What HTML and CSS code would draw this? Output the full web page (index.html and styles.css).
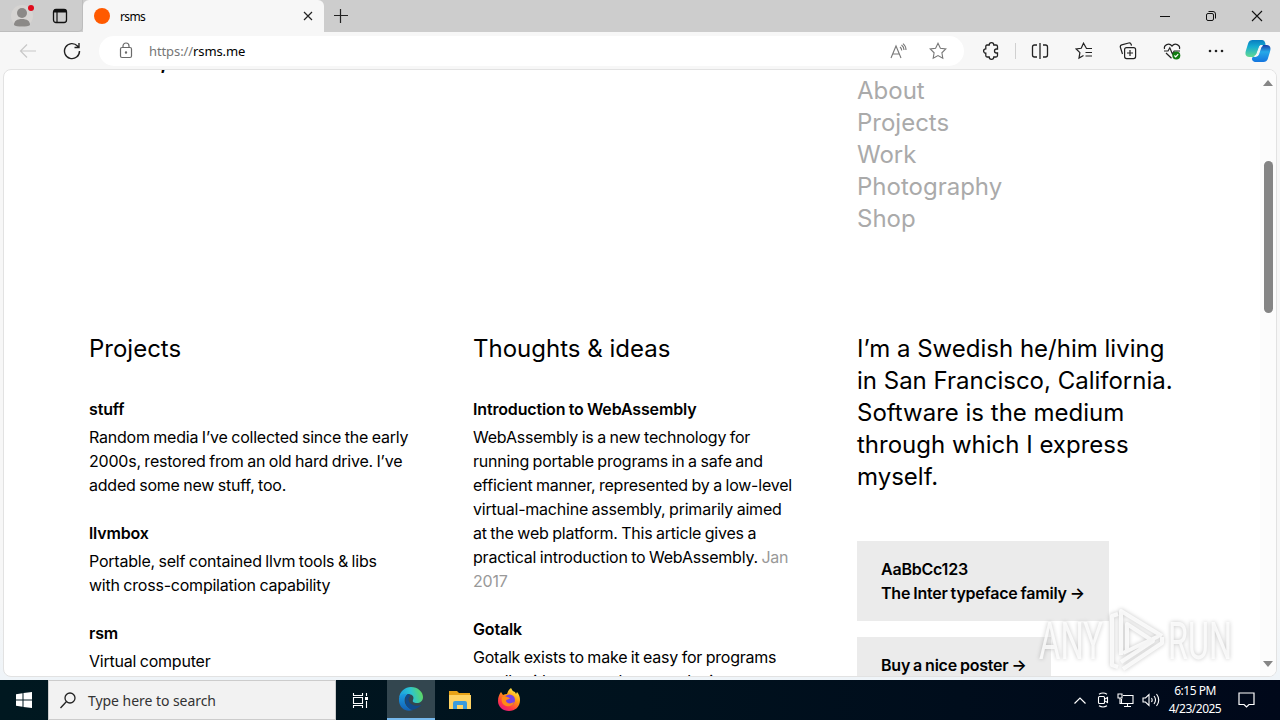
FILE: index.html
```html
<!DOCTYPE html>
<html lang="en">
<head>
    <meta charset="UTF-8">
    <meta name="viewport" content="width=device-width, initial-scale=1.0">
    <title>rsms</title>
    <link rel="stylesheet" href="styles.css">
</head>
<body>
    <div class="titlebar">
        <div class="profile">
            <svg width="24" height="24" viewBox="0 0 24 24"><circle cx="12" cy="12" r="11" fill="#d6d4d2"/><circle cx="12" cy="9" r="5" fill="#8b8987"/><path d="M4 21c0-4 3-6 8-6s8 2 8 6c-2 2-14 2-16 0z" fill="#8b8987"/><circle cx="21" cy="4" r="3" fill="#e00b1c"/></svg>
            <svg width="16" height="16" viewBox="0 0 16 16" fill="none" stroke="#111"><rect x="1.5" y="1.5" width="13" height="13" rx="2.5" stroke-width="1.3"/><path d="M2 3.5h12M2 2.5h12" stroke-width="2"/><path d="M5 4v10" stroke-width="1.2"/></svg>
        </div>
        <div class="tab">
            <span class="favicon"></span>
            <span class="tab-title">rsms</span>
            <svg width="10" height="10" viewBox="0 0 10 10" stroke="#222" stroke-width="1.2"><path d="M1 1l8 8M9 1l-8 8"/></svg>
        </div>
        <svg class="new-tab" width="16" height="16" viewBox="0 0 16 16" stroke="#222" stroke-width="1.2"><path d="M1 7.5h14M7.5 1v14"/></svg>
        <div class="window-buttons">
            <svg width="12" height="12" viewBox="0 0 12 12" stroke="#111"><path d="M1 6.5h10"/></svg>
            <svg width="12" height="12" viewBox="0 0 12 12" stroke="#111" fill="none"><rect x="1.5" y="3.5" width="7" height="7" rx="1.5"/><path d="M3.500 1.500h4.500q2.500 0 2.500 2.500v4.500"/></svg>
            <svg width="12" height="12" viewBox="0 0 12 12" stroke="#111" stroke-width="1.1"><path d="M1 1l10 10M11 1L1 11"/></svg>
        </div>
    </div>

    <div class="toolbar">
        <svg class="back" width="18" height="16" viewBox="0 0 18 16" fill="none" stroke="#c8c8c8" stroke-width="1.2"><path d="M17 8H2M8 1.500L1.500 8 8 14.500"/></svg>
        <svg class="reload" width="18" height="18" viewBox="0 0 18 18" fill="none" stroke="#222" stroke-width="1.4"><path d="M16.500 9A7.500 7.500 0 1 1 14.500 4L16 5.500M16 1v4.500h-4.500"/></svg>
        <div class="address">
            <svg class="lock" width="14" height="17" viewBox="0 0 14 17" fill="none" stroke="#6a6a6a" stroke-width="1.2"><rect x="1.500" y="5.500" width="11" height="10" rx="1.500"/><path d="M4 5.500V4a3 3 0 0 1 6 0v1.500"/><circle cx="7" cy="10.500" r=".6" fill="#6a6a6a"/></svg>
            <span class="url"><span>https://</span>rsms.me</span>
            <svg class="read" width="18" height="16" viewBox="0 0 18 16" fill="none" stroke="#777" stroke-width="1.1"><path d="M2 15L7 3l5 12M4 11h6M11 4q1.700 1.400 1.700 3.500M12.500 2q2.500 1.800 2.500 5M14 .6Q17 3 17 7"/></svg>
            <svg width="18" height="18" viewBox="0 0 18 18" fill="none" stroke="#777" stroke-width="1.1"><path d="M9 1.300l2.400 4.900 5.400.8-3.900 3.800.9 5.400L9 13.600l-4.800 2.600.9-5.400L1.200 7l5.400-.8z"/></svg>
        </div>
        <div class="tools">
            <svg width="18" height="18" viewBox="0 0 18 18" fill="none" stroke="#222" stroke-width="1.3"><path d="M5 3h2.200a2.300 2.300 0 0 1 4.600 0H14q1.500 0 1.500 1.500V7h-1a2 2 0 0 0 0 4h1v2.500q0 1.500-1.500 1.500h-2.200a2.300 2.300 0 0 1-4.600 0H5q-1.200 0-1.200-1.500v-2.300a2.200 2.200 0 0 1 0-4.400V4.500Q3.800 3 5 3z"/></svg>
            <span class="divider"></span>
            <svg width="18" height="18" viewBox="0 0 18 18" fill="none" stroke="#222" stroke-width="1.3"><path d="M6 3H3.500q-2 0-2 2v8q0 2 2 2H6M12 3h2.500q2 0 2 2v8q0 2-2 2H12M9 1v16"/></svg>
            <svg width="18" height="18" viewBox="0 0 18 18" fill="none" stroke="#222" stroke-width="1.2"><path d="M17 6.500h-5.500L8.500 1.200 6.200 6.300l-5 .7 3.700 3.700-.9 5.300L8.500 13.500M10.500 10.500H17M10.500 14H17"/></svg>
            <svg width="18" height="18" viewBox="0 0 18 18" fill="none" stroke="#222" stroke-width="1.2"><rect x="5.600" y="5.600" width="11" height="11" rx="2"/><path d="M11 8v6M8 11h6M3.500 12L1.300 5Q1 3.300 2.700 2.800l7-1.800q2-.4 2.400 1.300l.4 1.300"/></svg>
            <svg width="18" height="18" viewBox="0 0 18 18" fill="none" stroke="#222" stroke-width="1.2"><path d="M1.500 7C.5 3 6 .3 9 4c3-3.700 8.500-1 7.500 3M1 9h4l1.800-3.200L9.400 12l1.800-3H17M3 11l5.500 5.300"/><circle cx="13.300" cy="13.400" r="4" fill="#107c10" stroke="none"/><path d="M11.400 13.500l1.300 1.300 2.500-2.700" stroke="#fff"/></svg>
            <svg width="18" height="18" viewBox="0 0 18 18" fill="#222"><circle cx="3" cy="9" r="1.300"/><circle cx="9" cy="9" r="1.300"/><circle cx="15" cy="9" r="1.300"/></svg>
            <svg class="copilot" width="26" height="24" viewBox="0 0 24 24" preserveAspectRatio="none">
                <defs>
                    <linearGradient id="cpA" x1="0" y1="0" x2="0" y2="1"><stop offset="0" stop-color="#087dc0"/><stop offset=".4" stop-color="#16acd1"/><stop offset="1" stop-color="#65da91"/></linearGradient>
                    <linearGradient id="cpB" x1="0" y1="0" x2="0" y2="1"><stop offset="0" stop-color="#173ba8"/><stop offset=".4" stop-color="#26a9e8"/><stop offset="1" stop-color="#1475df"/></linearGradient>
                </defs>
                <path d="M17 23H9q-2 0-2.700-3L7 18h1q2 0 2.700-2L13 9q1-3 4-3h3c4 0 4 4 3 7l-2 7q-1 3-4 3z" fill="url(#cpB)"/>
                <path d="M7 1h9q2 0 2.700 3L19 6h-3q-2 0-2.700 2L11 15q-1 3-4 3H4c-4 0-4-4-3-7l2-7q1-3 4-3z" fill="url(#cpA)"/>
                <path d="M13.600 7.500q.5-1 2-1h.6q-1.200.5-1.700 2l-2 6.500q-.8 2.500-3 2.500h-.8q1.700-.7 2.300-2.500z" fill="#f7f7f7" stroke="#f7f7f7"/>
            </svg>
        </div>
    </div>

    <div class="viewport">
        <div class="page">
            <div class="intro">,</div>
            <nav class="menu">
                <a>About</a>
                <a>Projects</a>
                <a>Work</a>
                <a>Photography</a>
                <a>Shop</a>
            </nav>
            <section>
                <h2>Projects</h2>
                <h3>stuff</h3>
                <p>Random media I’ve collected since the early<br>2000s, restored from an old hard drive. I’ve<br>added some new stuff, too.</p>
                <h3>llvmbox</h3>
                <p>Portable, self contained llvm tools &amp; libs<br>with cross-compilation capability</p>
                <h3>rsm</h3>
                <p>Virtual computer</p>
            </section>
            <section>
                <h2>Thoughts &amp; ideas</h2>
                <h3>Introduction to WebAssembly</h3>
                <p>WebAssembly is a new technology for<br>running portable programs in a safe and<br>efficient manner, represented by a low-level<br>virtual-machine assembly, primarily aimed<br>at the web platform. This article gives a<br>practical introduction to WebAssembly. <span class="date">Jan<br>2017</span></p>
                <h3>Gotalk</h3>
                <p>Gotalk exists to make it easy for programs<br>to talk with one another over the internet</p>
            </section>
            <section class="about">
                <h2>I’m a Swedish he/him living<br>in San Francisco, California.<br>Software is the medium<br>through which I express<br>myself.</h2>
                <a class="card">AaBbCc123<br>The Inter typeface family →</a>
                <a class="card">Buy a nice poster →</a>
            </section>
        </div>
        <div class="scrollbar">
            <svg width="10" height="6" viewBox="0 0 10 6"><path d="M0 6l5-6 5 6z" fill="#858585"/></svg>
            <span class="thumb"></span>
            <svg width="10" height="6" viewBox="0 0 10 6"><path d="M0 0l5 6 5-6z" fill="#858585"/></svg>
        </div>
    </div>

    <svg class="watermark" width="204" height="70" viewBox="0 0 204 70">
        <g fill="#fff" fill-opacity=".8" font-family="Roboto, sans-serif" font-size="52">
            <text x="4" y="53" textLength="64" lengthAdjust="spacingAndGlyphs">ANY</text>
            <text x="133" y="53" textLength="64" lengthAdjust="spacingAndGlyphs">RUN</text>
        </g>
        <g fill="none" stroke="#fff" stroke-opacity=".8" stroke-width="4" stroke-linejoin="round">
            <path d="M83 8l-6 2v49l6 2M86 49V5l41 25M88 63l39-26v-6M88 47l36-17M92 44V18l26 17-32 21"/>
        </g>
    </svg>

    <div class="taskbar">
        <div class="start"><svg width="16" height="16" viewBox="0 0 16 16" fill="#fff"><path d="M0 2.300L6.500 1.300v6.200H0zM7.500 1.100L16 0v7.500H7.500zM0 8.500h6.500v6.200L0 13.700zM7.500 8.500H16V16l-8.500-1.100z"/></svg></div>
        <div class="search">
            <svg width="16" height="17" viewBox="0 0 16 17" fill="none" stroke="#222" stroke-width="1.300"><circle cx="10" cy="6" r="5"/><path d="M6.300 9.700L.5 16"/></svg>
            <span>Type here to search</span>
        </div>
        <div class="app task-view"><svg width="17" height="17" viewBox="0 0 17 17" fill="none" stroke="#fff" stroke-width="1.100"><path d="M1.500 1v2.500h9V1M1.500 16v-2.500h9V16M1.500 5.500h9v6h-9zM14.500 1v3M14.500 9v7"/><path d="M13 5h3v3h-3z" fill="#fff" stroke="none"/></svg></div>
        <div class="app active">
            <svg width="24" height="24" viewBox="0 0 24 24">
                <defs>
                    <linearGradient id="edA" x1="0" y1=".5" x2="1" y2=".3"><stop offset="0" stop-color="#1b9de2"/><stop offset=".5" stop-color="#2bc3d2"/><stop offset="1" stop-color="#62d957"/></linearGradient>
                    <linearGradient id="edB" x1="0" y1="0" x2="0" y2="1"><stop offset="0" stop-color="#1b9de2"/><stop offset="1" stop-color="#1260b5"/></linearGradient>
                </defs>
                <path d="M0 11C1 4 6 0 12 0c7 0 12 5 12 10 0 4-3 6-6 6-3 0-5-1-4-3 2-4-2-6-5-6-5 0-8 2-9 4z" fill="url(#edA)"/>
                <path d="M0 11c1-4 5-5 9-4-3 2-4 5-3 9 1 3 4 6 8 7C6 26-1 20 0 11z" fill="url(#edB)"/>
                <path d="M9 7c-4 3-4 11 3 15.800 4 .2 8-2 10.500-5.300C17 21 10 17 9.500 13c-.2-2 .5-3 2-4z" fill="#114a8b"/>
            </svg>
        </div>
        <div class="app">
            <svg width="22" height="20" viewBox="0 0 22 20"><path d="M0 1h8l2 2h11v5H0z" fill="#e8a317"/><path d="M0 5h22v14H0z" fill="#ffd363"/><path d="M4 19v-6q0-2 2-2h10q2 0 2 2v6h-4v-4H8v4z" fill="#3b9bdc"/></svg>
        </div>
        <div class="app">
            <svg width="24" height="24" viewBox="0 0 24 24">
                <defs><linearGradient id="ffA" x1=".8" y1="0" x2=".2" y2="1"><stop offset="0" stop-color="#fff44f"/><stop offset=".4" stop-color="#ff980e"/><stop offset=".75" stop-color="#ff3647"/><stop offset="1" stop-color="#e31587"/></linearGradient></defs>
                <path d="M4 4l2 3q2-1 4-1 1-4 4-6 1 3 4 4l1 2 1-2c2 2 3 5 3 8 0 7-5 11-11 11S1 19 1 13c0-4 1-6 3-9z" fill="url(#ffA)"/>
                <circle cx="12.500" cy="12" r="5.500" fill="#7542e5"/>
                <path d="M5 9c3-2 5 0 8 1-1 2-4 1-4 3 1 3 5 3 8 1-1 4-5 5-8 4-4-1-5-5-4-9z" fill="#ff8a16"/>
            </svg>
        </div>
        <div class="tray">
            <svg class="chevron" width="12" height="7" viewBox="0 0 12 7" fill="none" stroke="#fff" stroke-width="1.200"><path d="M.5 6.500L6 1l5.500 5.500"/></svg>
            <svg width="12" height="16" viewBox="0 0 12 16" fill="none" stroke="#fff" stroke-width="1.100"><rect x="1.500" y="4.500" width="6" height="7" rx="1"/><path d="M8 7l2.500-1.500v5L8 9M2 2.200q4-2.500 8 0M2 13.800q4 2.500 8 0"/></svg>
            <svg width="17" height="15" viewBox="0 0 17 15" fill="none" stroke="#fff" stroke-width="1.100"><path d="M6 2.500h10v8H4.500V6M10.500 10.500v3M7 13.500h7M1 1h4v4H1zM3 5v5.500h1.500"/></svg>
            <svg width="18" height="14" viewBox="0 0 18 14" fill="none" stroke="#fff" stroke-width="1.100"><path d="M1 5h2.500L7 1.500v11L3.500 9H1zM9.500 5q1.300 2 0 4M12 3q3 4 0 8M14.500 1q4.500 6 0 12"/></svg>
            <div class="clock">6:15 PM<br>4/23/2025</div>
            <svg class="notes" width="17" height="16" viewBox="0 0 17 16" fill="none" stroke="#fff" stroke-width="1.200"><path d="M1 1h15v11.500h-5L8.500 15 6 12.500H1z"/></svg>
        </div>
    </div>
</body>
</html>
```
FILE: styles.css
```css
* {
    box-sizing: border-box;
}
body {
    margin: 0;
    width: 1280px;
    height: 720px;
    overflow: hidden;
    position: relative;
    display: flex;
    flex-direction: column;
    background: linear-gradient(#f7f7f7 600px, #eff4f8 676px);
    color: #000;
    font-family: Inter, sans-serif;
}
svg {
    display: block;
    flex: none;
}

/* browser window */
.titlebar {
    height: 32px;
    flex: none;
    display: flex;
    align-items: center;
    background: #cdcdcd;
    font-family: "Noto Sans", sans-serif;
}
.profile {
    width: 83px;
    height: 32px;
    padding-left: 10px;
    display: flex;
    align-items: center;
    gap: 18px;
    border-right: 1px solid #bdbdbd;
    border-bottom: 1px solid #bdbdbd;
    border-radius: 0 0 5px 0;
}
.tab {
    width: 241px;
    height: 32px;
    padding: 0 11px;
    display: flex;
    align-items: center;
    background: #f7f7f7;
    border-radius: 6px 6px 0 0;
}
.favicon {
    width: 16px;
    height: 16px;
    border-radius: 50%;
    background: #ff5a00;
}
.tab-title {
    flex: 1;
    margin-left: 10px;
    font-size: 12px;
    letter-spacing: -0.6px;
}
.new-tab {
    margin-left: 9px;
}
.window-buttons {
    margin-left: auto;
    display: flex;
    gap: 34px;
    padding-right: 17px;
}
.toolbar {
    height: 37px;
    flex: none;
    display: flex;
    align-items: center;
    padding-left: 19px;
    background: #f7f7f7;
}
.reload {
    margin-left: 26px;
}
.address {
    width: 865px;
    height: 30px;
    margin-left: 18px;
    padding: 0 17px 0 20px;
    display: flex;
    align-items: center;
    border-radius: 15px;
    background: #fff;
}
.url {
    flex: 1;
    margin-left: 16px;
    font-family: "Noto Sans", sans-serif;
    font-size: 13px;
    letter-spacing: -0.1px;
}
.url span {
    color: #767676;
}
.read {
    margin-right: 22px;
}
.tools {
    flex: 1;
    display: flex;
    align-items: center;
    padding-left: 18px;
    gap: 26px;
}
.tools .divider {
    width: 1px;
    height: 16px;
    margin: 0 -11px 0 -11px;
    background: #d0d0d0;
}
.tools .copilot {
    margin-left: -6px;
}
.viewport {
    height: 608px;
    width: 1274px;
    flex: none;
    margin-left: 3px;
    display: flex;
    overflow: hidden;
    background: #fff;
    border: 1px solid #e2e2e2;
    border-radius: 8px;
}

/* page content */
.page {
    flex: 1;
    height: 900px;
    margin-top: -27px;
    padding-left: 85px;
    display: grid;
    grid-template-columns: 320px 320px 330px;
    grid-template-rows: 290px 1fr;
    column-gap: 64px;
    font-size: 16px;
    line-height: 24px;
}
.intro {
    padding: 2px 0 0 71px;
    font-size: 24px;
    font-weight: 600;
    line-height: 32px;
}
.menu {
    grid-column: 3;
    padding-top: 32px;
    color: #aaa;
    font-size: 24px;
    line-height: 32px;
}
.menu a {
    display: block;
}
h2 {
    margin: 0 0 32px;
    font-size: 24px;
    font-weight: 400;
    line-height: 32px;
}
h3 {
    margin: 0 0 4px;
    font-size: 16px;
    font-weight: 600;
    line-height: 24px;
    letter-spacing: -0.15px;
    word-spacing: -0.5px;
}
p {
    margin: 0 0 24px;
    white-space: nowrap;
    letter-spacing: -0.22px;
    word-spacing: -0.7px;
}
.date {
    color: #999;
}
.about {
    display: flex;
    flex-direction: column;
    align-items: flex-start;
}
.about h2 {
    margin-bottom: 48px;
}
.card {
    padding: 16px 24px;
    margin-bottom: 16px;
    background: #ebebeb;
    font-weight: 600;
    white-space: nowrap;
    letter-spacing: -0.22px;
    word-spacing: -0.8px;
}
.scrollbar {
    width: 16px;
    display: flex;
    flex-direction: column;
    align-items: center;
    padding: 10px 0 9px;
    background: #fcfcfc;
}
.thumb {
    width: 9px;
    height: 152px;
    margin: 75px 0 auto;
    border-radius: 5px;
    background: #858585;
}
.watermark {
    position: absolute;
    left: 1035px;
    top: 606px;
    filter: drop-shadow(0 0 2px rgba(0, 0, 0, 0.28));
}

/* taskbar */
.taskbar {
    height: 40px;
    flex: none;
    margin-top: auto;
    display: flex;
    background: linear-gradient(90deg, #001820, #00121e 50%, #00081a);
    color: #fff;
}
.start {
    width: 48px;
    padding: 12px 16px;
}
.search {
    width: 288px;
    display: flex;
    align-items: center;
    gap: 12px;
    padding-left: 11px;
    background: #f2f2f2;
    border: 1px solid #ccc;
    color: #333;
    font-family: "Noto Sans", sans-serif;
    font-size: 14px;
    letter-spacing: -0.05px;
}
.app {
    width: 49px;
    display: flex;
    align-items: center;
    justify-content: center;
}
.app.task-view {
    width: 51px;
    padding-right: 3px;
}
.app.active {
    width: 48px;
    background: #33464f;
    border-bottom: 2px solid #76b9ed;
}
.tray {
    margin-left: auto;
    display: flex;
    align-items: center;
    gap: 8px;
    padding-right: 25px;
}
.chevron {
    margin-right: 3px;
}
.clock {
    width: 56px;
    margin-left: -1px;
    text-align: center;
    font-family: "Noto Sans", sans-serif;
    font-size: 12px;
    line-height: 18px;
    letter-spacing: -0.5px;
}
.notes {
    margin-left: 7px;
}
```
